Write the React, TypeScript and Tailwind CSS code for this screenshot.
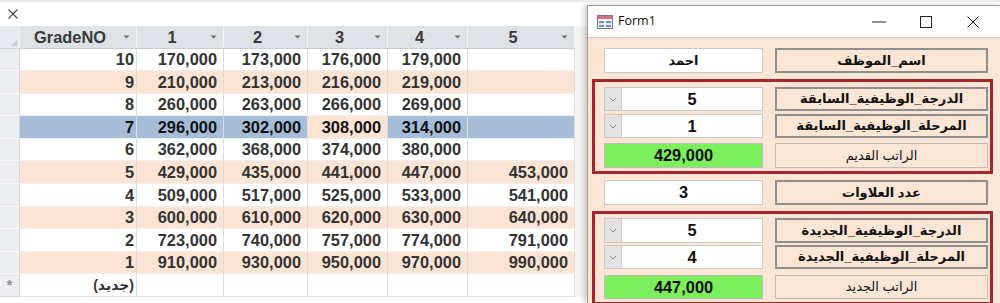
import React from "react";

const colW = ["w-[117px]", "w-[87px]", "w-[84px]", "w-[80px]", "w-[80px]", "w-[107px]"];
const rowH = ["h-[22px]", "h-[23px]", "h-[22px]", "h-[23px]", "h-[22px]", "h-[23px]", "h-[23px]", "h-[22px]", "h-[23px]", "h-[22px]", "h-[23px]"];

const rows: string[][] = [
  ["10", "170,000", "173,000", "176,000", "179,000", ""],
  ["9", "210,000", "213,000", "216,000", "219,000", ""],
  ["8", "260,000", "263,000", "266,000", "269,000", ""],
  ["7", "296,000", "302,000", "308,000", "314,000", ""],
  ["6", "362,000", "368,000", "374,000", "380,000", ""],
  ["5", "429,000", "435,000", "441,000", "447,000", "453,000"],
  ["4", "509,000", "517,000", "525,000", "533,000", "541,000"],
  ["3", "600,000", "610,000", "620,000", "630,000", "640,000"],
  ["2", "723,000", "740,000", "757,000", "774,000", "791,000"],
  ["1", "910,000", "930,000", "950,000", "970,000", "990,000"],
];

const headers = ["GradeNO", "1", "2", "3", "4", "5"];

function Arrow() {
  return (
    <svg width="7" height="4" viewBox="0 0 7 4" className="shrink-0">
      <path d="M0.5 0.5 L6.5 0.5 L3.5 3.5 Z" fill="#6b6b6b" />
    </svg>
  );
}

function Chevron() {
  return (
    <svg width="8" height="5" viewBox="0 0 8 5">
      <path d="M0.8 0.8 L4 4 L7.2 0.8" fill="none" stroke="#8a8a8a" strokeWidth="1" />
    </svg>
  );
}

function Label({ text, light }: { text: string; light?: boolean }) {
  return (
    <div
      className={
        light
          ? "w-[213px] h-full flex items-center justify-center bg-[#fbe5d5] border border-[#c2bcb6] text-[13px] text-[#111]"
          : "w-[213px] h-full flex items-center justify-center bg-[#fbe5d5] border-2 border-[#8f8f8f] text-[13px] font-bold text-[#111]"
      }
      dir="rtl"
    >
      {text}
    </div>
  );
}

function TextBox({ value, green, arabic }: { value: string; green?: boolean; arabic?: boolean }) {
  return (
    <div
      className={
        green
          ? "w-[159px] h-full flex items-center justify-center bg-[#7cf05c] border border-[#bdbdbd] text-[16.4px] font-bold text-[#111]"
          : arabic
          ? "w-[159px] h-full flex items-center justify-center bg-white border border-[#c9c9c9] text-[13px] font-bold text-[#111]"
          : "w-[159px] h-full flex items-center justify-center bg-white border border-[#c9c9c9] text-[16.4px] font-bold text-[#111]"
      }
    >
      {value}
    </div>
  );
}

function Combo({ value }: { value: string }) {
  return (
    <div className="w-[159px] h-full flex bg-white border border-[#c9c9c9]">
      <div className="w-[17px] h-full bg-[#e3e3e3] border-r border-[#cfcfcf] flex items-center justify-center">
        <Chevron />
      </div>
      <div className="flex-1 flex items-center justify-center text-[16.4px] font-bold text-[#111]">{value}</div>
    </div>
  );
}

function FormIcon() {
  return (
    <svg width="16" height="14" viewBox="0 0 16 14">
      <rect x="0.5" y="0.5" width="15" height="13" fill="#eef2f8" stroke="#8c6f8f" />
      <rect x="1" y="1" width="14" height="3" fill="#d8708c" />
      <rect x="2" y="6" width="5" height="2" fill="#6a8fcf" />
      <rect x="9" y="6" width="5" height="2" fill="#6a8fcf" />
      <rect x="2" y="10" width="5" height="2" fill="#6a8fcf" />
      <rect x="9" y="10" width="5" height="2" fill="#6a8fcf" />
    </svg>
  );
}

export default function App() {
  return (
    <div className="w-[1000px] h-[303px] overflow-hidden bg-white flex border-t-2 border-[#ececec] font-['Liberation_Sans','DejaVu_Sans',Arial,sans-serif]">
      {/* Datasheet */}
      <div className="w-[587px] shrink-0 flex flex-col">
        <div className="h-[24px] flex items-center pl-[8px]">
          <svg width="10" height="10" viewBox="0 0 10 10">
            <path d="M0.5 0.5 L9.5 9.5 M9.5 0.5 L0.5 9.5" stroke="#444" strokeWidth="1.1" />
          </svg>
        </div>
        <div className="flex">
          <div className="w-[575px] flex flex-col">
            {/* header */}
            <div className="h-[23px] flex bg-[#dee2e7] border-b border-[#c9ced6]">
              <div className="w-[20px] h-full bg-[#e6e9ed] border-r border-[#f2f3f5] flex items-end justify-end p-[2px]">
                <svg width="6" height="6" viewBox="0 0 6 6">
                  <path d="M6 0 L6 6 L0 6 Z" fill="#c8ccd2" />
                </svg>
              </div>
              {headers.map((h, i) => (
                <div key={i} className={`${colW[i]} h-full flex items-center border-r border-[#f2f3f5]`}>
                  <div className="flex-1 text-center text-[16.4px] font-bold text-[#3a3a3a]">{h}</div>
                  <div className="w-[16px] flex justify-center pr-[4px]">
                    <Arrow />
                  </div>
                </div>
              ))}
            </div>
            {rows.map((r, ri) => {
              const selected = ri === 3;
              const peach = ri % 2 === 1;
              return (
                <div key={ri} className={`${rowH[ri]} flex`}>
                  <div className="w-[20px] h-full bg-[#eceef1] border-r border-[#d3d6da] border-b border-b-[#fafafa]" />
                  {r.map((v, ci) => {
                    let bg = peach ? "bg-[#fce4d4]" : "bg-white";
                    if (selected) bg = ci === 3 ? "bg-[#fce4d4]" : "bg-[#a5bdd8]";
                    return (
                      <div
                        key={ci}
                        className={`${colW[ci]} ${bg} h-full flex items-center justify-end border-r border-[#dcdcdc] border-b border-b-[#eeeeee] text-[16.4px] font-bold ${selected ? "text-[#111]" : "text-[#333]"} ${ci === 0 ? "pr-[2px]" : "pr-[6px]"}`}
                      >
                        {v}
                      </div>
                    );
                  })}
                </div>
              );
            })}
            {/* new row */}
            <div className={`${rowH[10]} flex`}>
              <div className="w-[20px] h-full bg-[#eceef1] border-r border-[#d3d6da] border-b border-[#d3d6da] flex items-center justify-center text-[14px] text-[#8a8a8a] font-bold">
                *
              </div>
              {headers.map((_, ci) => (
                <div
                  key={ci}
                  className={`${colW[ci]} h-full bg-white flex items-center justify-end border-r border-[#dcdcdc] border-b border-b-[#e3e3e3] text-[14px] font-bold text-[#333] ${ci === 0 ? "pr-[2px]" : "pr-[6px]"}`}
                >
                  {ci === 0 ? <span dir="rtl">(جديد)</span> : ""}
                </div>
              ))}
            </div>
            <div className="flex-1 bg-white" />
          </div>
          <div className="w-[12px] bg-[#f3f3f3]" />
        </div>
      </div>

      {/* Form window */}
      <div className="flex-1 mt-[3px] flex flex-col border-l border-t border-[#9c9c9c] shadow-[-3px_0_5px_rgba(0,0,0,0.18)]">
        <div className="h-[32px] bg-white border-b border-[#c8c8c8] flex items-center pl-[9px] shrink-0">
          <FormIcon />
          <span className="ml-[5px] text-[12.5px] text-[#111] font-['Open_Sans',sans-serif]">Form1</span>
          <div className="flex-1" />
          <svg width="14" height="2" viewBox="0 0 14 2" className="mr-[34px]">
            <path d="M0 1 L14 1" stroke="#222" strokeWidth="1" />
          </svg>
          <svg width="12" height="12" viewBox="0 0 12 12" className="mr-[35px]">
            <rect x="0.5" y="0.5" width="11" height="11" fill="none" stroke="#222" strokeWidth="1" />
          </svg>
          <svg width="12" height="12" viewBox="0 0 12 12" className="mr-[21px]">
            <path d="M0.5 0.5 L11.5 11.5 M11.5 0.5 L0.5 11.5" stroke="#222" strokeWidth="1" />
          </svg>
        </div>
        <div className="flex-1 bg-[#fbe5d5] pt-[10px] pl-[4px] flex flex-col">
          <div className="h-[25px] flex gap-[12px] pl-[12px]">
            <TextBox value="احمد" arabic />
            <Label text="اسم_الموظف" />
          </div>
          <div className="w-[401px] mt-[6px] border-[3px] border-[#a4262c] pl-[9px] pt-[5px] pb-[3px] flex flex-col">
            <div className="h-[24px] flex gap-[12px]">
              <Combo value="5" />
              <Label text="الدرجة_الوظيفية_السابقة" />
            </div>
            <div className="h-[24px] mt-[3px] flex gap-[12px]">
              <Combo value="1" />
              <Label text="المرحلة_الوظيفية_السابقة" />
            </div>
            <div className="h-[25px] mt-[5px] flex gap-[12px]">
              <TextBox value="429,000" green />
              <Label text="الراتب القديم" light />
            </div>
          </div>
          <div className="h-[25px] mt-[6px] flex gap-[12px] pl-[12px]">
            <TextBox value="3" />
            <Label text="عدد العلاوات" />
          </div>
          <div className="w-[401px] mt-[6px] border-[3px] border-[#a4262c] pl-[9px] pt-[4px] pb-[3px] flex flex-col">
            <div className="h-[25px] flex gap-[12px]">
              <Combo value="5" />
              <Label text="الدرجة_الوظيفية_الجديدة" />
            </div>
            <div className="h-[24px] mt-[2px] flex gap-[12px]">
              <Combo value="4" />
              <Label text="المرحلة_الوظيفية_الجديدة" />
            </div>
            <div className="h-[24px] mt-[6px] flex gap-[12px]">
              <TextBox value="447,000" green />
              <Label text="الراتب الجديد" light />
            </div>
          </div>
        </div>
      </div>
    </div>
  );
}
